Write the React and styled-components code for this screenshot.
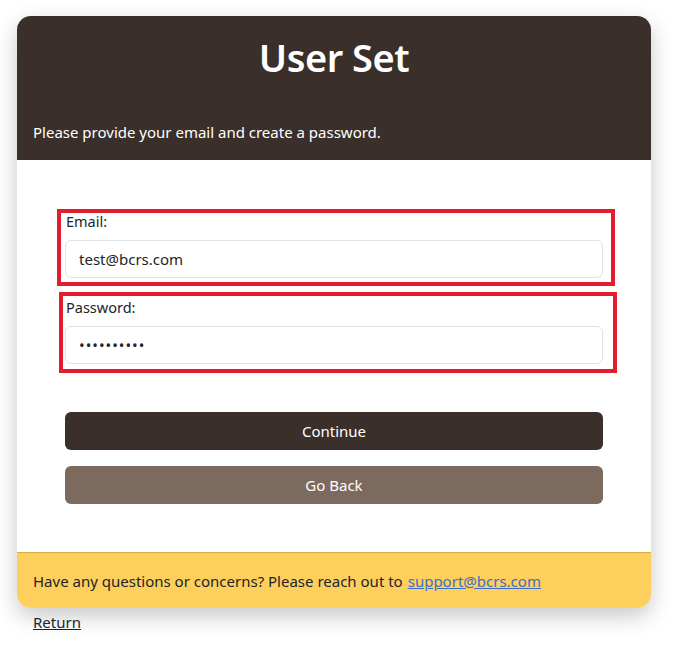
import React from "react";
import styled, { createGlobalStyle } from "styled-components";

const Global = createGlobalStyle`
  html, body { margin: 0; padding: 0; background: #fff; }
  body { font-family: "Noto Sans", "Open Sans", sans-serif; color: #212529; }
  * { box-sizing: border-box; }
`;

const Page = styled.div`
  padding: 16px 26px 20px 17px;
`;

const Card = styled.div`
  width: 634px;
  border-radius: 14px;
  overflow: hidden;
  background: #fff;
  box-shadow: 0 8px 22px rgba(0, 0, 0, 0.22);
`;

const Header = styled.div`
  background: #3a2f2a;
  color: #fff;
  height: 144px;
  padding: 18px 16px 0 16px;
  display: flex;
  flex-direction: column;
`;

const Title = styled.h1`
  margin: 0;
  text-align: center;
  font-size: 38px;
  font-weight: 600;
  line-height: 46px;
  letter-spacing: -0.5px;
`;

const Subtitle = styled.p`
  margin: 40px 0 0 0;
  font-size: 15px;
  line-height: 24px;
`;

const Body = styled.div`
  padding: 54px 48px 48px 48px;
  display: flex;
  flex-direction: column;
`;

const Group = styled.div`
  position: relative;
  display: flex;
  flex-direction: column;
  gap: 12px;
  margin-bottom: ${(p) => p.$mb || 0}px;
`;

const Annotation = styled.div`
  position: absolute;
  left: ${(p) => p.$l}px;
  right: ${(p) => p.$r}px;
  top: ${(p) => p.$t}px;
  bottom: ${(p) => p.$b}px;
  border: 4px solid #e31e2c;
  pointer-events: none;
`;

const Label = styled.label`
  font-size: 14.5px;
  line-height: 14px;
  padding-left: 1px;
  color: #212529;
`;

const Input = styled.input`
  height: 38px;
  width: 100%;
  border: 1px solid #dee2e6;
  border-radius: 6px;
  padding: 0 13px;
  font-family: inherit;
  font-size: 15px;
  color: #212529;
  background: #fff;
  outline: none;
  letter-spacing: ${(p) => (p.type === "password" ? "1px" : "0")};
`;

const Buttons = styled.div`
  margin-top: 48px;
  display: flex;
  flex-direction: column;
  gap: 16px;
`;

const Button = styled.button`
  height: 38px;
  width: 100%;
  border: none;
  border-radius: 6px;
  background: ${(p) => (p.$secondary ? "#7d6a5e" : "#3a2f2a")};
  color: #fff;
  font-family: inherit;
  font-size: 15px;
`;

const Footer = styled.div`
  background: #fdd05e;
  border-top: 1px solid #d4b04c;
  height: 56px;
  padding: 0 16px;
  display: flex;
  align-items: center;
  font-size: 15px;
  color: #212529;
`;

const MailLink = styled.a`
  color: #3b6fc4;
  text-decoration: underline;
  margin-left: 5px;
`;

const Return = styled.a`
  display: inline-block;
  margin: 4px 0 0 16px;
  font-size: 15px;
  color: #212529;
  text-decoration: underline;
`;

export default function App() {
  return (
    <>
      <Global />
      <Page>
        <Card>
          <Header>
            <Title>User Set</Title>
            <Subtitle>Please provide your email and create a password.</Subtitle>
          </Header>
          <Body>
            <Group $mb={22}>
              <Annotation $l={-8} $r={-12} $t={-5} $b={-8} />
              <Label>Email:</Label>
              <Input type="text" defaultValue="test@bcrs.com" />
            </Group>
            <Group>
              <Annotation $l={-6} $r={-14} $t={-8} $b={-9} />
              <Label>Password:</Label>
              <Input type="password" defaultValue="abcdefghij" />
            </Group>
            <Buttons>
              <Button>Continue</Button>
              <Button $secondary>Go Back</Button>
            </Buttons>
          </Body>
          <Footer>
            Have any questions or concerns? Please reach out to
            <MailLink href="#">support@bcrs.com</MailLink>
          </Footer>
        </Card>
        <Return href="#">Return</Return>
      </Page>
    </>
  );
}
